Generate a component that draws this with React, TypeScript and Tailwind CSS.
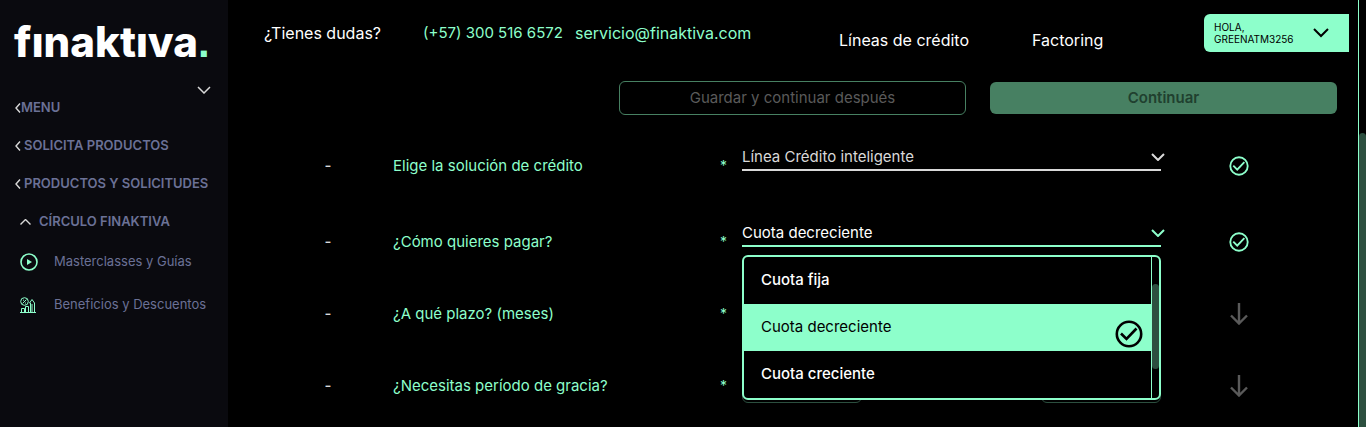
import { useState } from "react";
import type { ReactNode } from "react";

const OPTIONS = ["Cuota fija", "Cuota decreciente", "Cuota creciente"];

function Chevron({ className, d = "M1 1l6 6 6-6", box = "0 0 14 8" }: { className: string; d?: string; box?: string }) {
  return (
    <svg className={className} viewBox={box} fill="none" stroke="currentColor" aria-hidden="true">
      <path d={d} />
    </svg>
  );
}

function BackChevron() {
  return <Chevron className="h-[10px] w-[6px] stroke-[1.4] text-[#d9d9d9]" box="0 0 6 10" d="M5 .5L1 5l4 4.500" />;
}

function CheckCircle({ className }: { className: string }) {
  return (
    <svg className={className} viewBox="0 0 28 28" fill="none" stroke="currentColor" strokeWidth="2.6" aria-hidden="true">
      <circle cx="14" cy="14" r="12.2" />
      <path d="M6 13.500l5.500 5.500 10-10.500" />
    </svg>
  );
}

function ArrowDown() {
  return (
    <svg className="h-[22px] w-[18px] text-[#5a5a5a]" viewBox="0 0 18 22" fill="none" stroke="currentColor" strokeWidth="2.4" aria-hidden="true">
      <path d="M9 0v20M1 12.500l8 8 8-8" />
    </svg>
  );
}

function Growth() {
  return (
    <svg className="h-4 w-4 shrink-0" viewBox="0 0 16 16" fill="none" stroke="currentColor" aria-hidden="true">
      <circle cx="4.500" cy="4.500" r="3.800" />
      <path d="M2.500 6.500l4-4M3 3.200h1M5 6h1M0 15.500h16M1.500 15.500v-4h3v4M5.500 15.500v-6h3v6M10.500 15.500V6h-1l2.500-3.500L14.500 6v9.500M12 7v8" />
    </svg>
  );
}

function Select({ id, value, options, onChange, active }: { id: string; value: string; options: string[]; onChange: (v: string) => void; active?: boolean }) {
  return (
    <div className={active ? "flex items-center border-b-2 border-[#8dffcb] text-white" : "flex items-center border-b-2 border-[#d9d9d9] text-[#d9d9d9]"}>
      <select
        id={id}
        value={value}
        onChange={(e) => onChange(e.target.value)}
        className="h-6 min-w-0 flex-1 appearance-none bg-black text-[15px] outline-none"
      >
        {options.map((o) => (
          <option key={o}>{o}</option>
        ))}
      </select>
      <Chevron className={active ? "-mr-1 h-2 w-[14px] stroke-2 text-[#8dffcb]" : "-mr-1 h-2 w-[14px] stroke-2"} />
    </div>
  );
}

function Row({ height, label, htmlFor, done, children }: { height: string; label: string; htmlFor?: string; done?: boolean; children?: ReactNode }) {
  return (
    <div className={`grid grid-cols-[130fr_327fr_22px_419fr_155fr] items-center ${height}`}>
      <span className="text-center text-[15px] font-medium text-[#d9d9d9]">-</span>
      <label htmlFor={htmlFor} className="text-[15px] text-[#8dffcb]">{label}</label>
      <span className="text-sm text-[#8dffcb]">*</span>
      <div>{children}</div>
      <div className="flex justify-center text-[#8dffcb]">{done ? <CheckCircle className="h-5 w-5" /> : <ArrowDown />}</div>
    </div>
  );
}

export default function App() {
  const [credit, setCredit] = useState("Línea Crédito inteligente");
  const [quota, setQuota] = useState("Cuota decreciente");

  return (
    <div className="flex h-screen overflow-hidden bg-black font-['Inter',sans-serif] text-[15px] text-white">
      <aside className="w-[228px] shrink-0 bg-[#0a0a0f] text-[13px] text-[#6b7196]">
        <a href="#inicio" aria-label="finaktiva" className="flex h-[82px] items-baseline pt-4 pl-[14px] text-[42px] leading-[52px] font-extrabold text-white">
          fınaktıva<span className="font-['Liberation_Sans',sans-serif] font-bold text-[#8dffcb]">.</span>
        </a>
        <div className="flex justify-end pr-[17px]">
          <button type="button" aria-label="Contraer" className="flex h-4 items-center text-[#d9d9d9]">
            <Chevron className="h-2 w-[14px] stroke-[1.5]" />
          </button>
        </div>
        <nav className="flex flex-col pl-[15px] font-semibold">
          <a href="#menu" className="flex h-[19px] items-center"><BackChevron />MENU</a>
          <a href="#solicita" className="flex h-[57px] items-center gap-[3px]"><BackChevron />SOLICITA PRODUCTOS</a>
          <a href="#productos" className="flex h-[19px] items-center gap-[3px]"><BackChevron />PRODUCTOS Y SOLICITUDES</a>
          <a href="#circulo" className="flex h-[57px] items-center gap-2 pl-[5px]"><Chevron className="h-[6px] w-[11px] stroke-[1.4] text-[#d9d9d9]" box="0 0 11 6" d="M.5 5.500l5-5 5 5" />CÍRCULO FINAKTIVA</a>
          <a href="#masterclasses" className="flex h-6 items-center gap-4 pl-[5px] font-normal">
            <svg className="h-[18px] w-[18px] shrink-0 text-[#8dffcb]" viewBox="0 0 18 18" fill="none" stroke="currentColor" strokeWidth="1.6" aria-hidden="true">
              <circle cx="9" cy="9" r="8" />
              <path d="M7 6l5 3-5 3z" fill="currentColor" stroke="none" />
            </svg>
            Masterclasses y Guías
          </a>
          <a href="#beneficios" className="flex h-[62px] items-center gap-[18px] pl-[5px] font-normal"><span className="text-[#8dffcb]"><Growth /></span>Beneficios y Descuentos</a>
        </nav>
      </aside>

      <main className="min-w-0 flex-1">
        <header className="grid h-[66px] grid-cols-[159fr_152fr_264fr_193fr_172fr_145px] items-center pr-[9px] pl-9 text-base">
          <span>¿Tienes dudas?</span>
          <a href="tel:+573005166572" className="text-[15px] text-[#8dffcb]">(+57) 300 516 6572</a>
          <a href="mailto:servicio@finaktiva.com" className="text-[#8dffcb]">servicio@finaktiva.com</a>
          <a href="#lineas" className="pt-[14px]">Líneas de crédito</a>
          <a href="#factoring" className="pt-[14px]">Factoring</a>
          <button type="button" className="flex h-[38px] items-center justify-between rounded-l-md bg-[#8dffcb] pr-5 pl-[10px] text-left text-[10px] leading-3 text-black">
            <span>HOLA,<br />GREENATM3256</span>
            <Chevron className="h-[10px] w-4 stroke-2" box="0 0 16 10" d="M1 1l7 7 7-7" />
          </button>
        </header>

        <div className="flex items-center justify-end gap-6 pt-[15px] pr-[21px]">
          <button type="button" className="h-[34px] w-[347px] rounded-md border border-[#478062] text-[#5a5a5a]">Guardar y continuar después</button>
          <button type="button" className="h-8 w-[347px] rounded-md bg-[#478062] font-semibold text-[#20402f]">Continuar</button>
        </div>

        <form className="pt-[13px] pr-[42px] pl-[35px]">
          <Row height="h-[76px]" label="Elige la solución de crédito" htmlFor="credit" done>
            <div className="pb-4">
              <Select id="credit" value={credit} options={["Línea Crédito inteligente"]} onChange={setCredit} />
            </div>
          </Row>
          <Row height="h-[76px]" label="¿Cómo quieres pagar?" htmlFor="quota" done>
            <div className="pb-4">
              <div className="relative">
                <Select id="quota" value={quota} options={OPTIONS} onChange={setQuota} active />
                <div className="absolute inset-x-0 top-full z-10 mt-2 flex overflow-hidden rounded-md border-2 border-[#8dffcb] bg-black">
                  <ul role="listbox" aria-label="¿Cómo quieres pagar?" className="flex-1">
                    {OPTIONS.map((o) => (
                      <li key={o} role="option" aria-selected={o === quota}>
                        <button
                          type="button"
                          onClick={() => setQuota(o)}
                          className={
                            o === quota
                              ? "flex h-[47px] w-full items-center justify-between bg-[#8dffcb] pr-2 pl-[17px] text-left text-black"
                              : "flex h-[47px] w-full items-center justify-between pr-2 pl-[17px] text-left font-medium text-white"
                          }
                        >
                          {o}
                          {o === quota && <CheckCircle className="mt-3 h-7 w-7" />}
                        </button>
                      </li>
                    ))}
                  </ul>
                  <div className="w-2 border-l border-[#8dffcb] pt-[27px]">
                    <div className="h-[85px] rounded-full bg-[#2c4f3f]" />
                  </div>
                </div>
              </div>
            </div>
          </Row>
          <Row height="h-[68px]" label="¿A qué plazo? (meses)" />
          <Row height="h-[76px]" label="¿Necesitas período de gracia?">
            <div className="flex justify-between">
              <button type="button" aria-label="Sí" className="h-[34px] w-[120px] rounded-md border border-[#2c4f3f]" />
              <button type="button" aria-label="No" className="h-[34px] w-[120px] rounded-md border border-[#2c4f3f]" />
            </div>
          </Row>
        </form>
      </main>

      <div className="w-2 shrink-0 border-l border-[#8dffcb] pt-[133px]">
        <div className="h-full rounded-t-full bg-[#2c4f3f]" />
      </div>
    </div>
  );
}
